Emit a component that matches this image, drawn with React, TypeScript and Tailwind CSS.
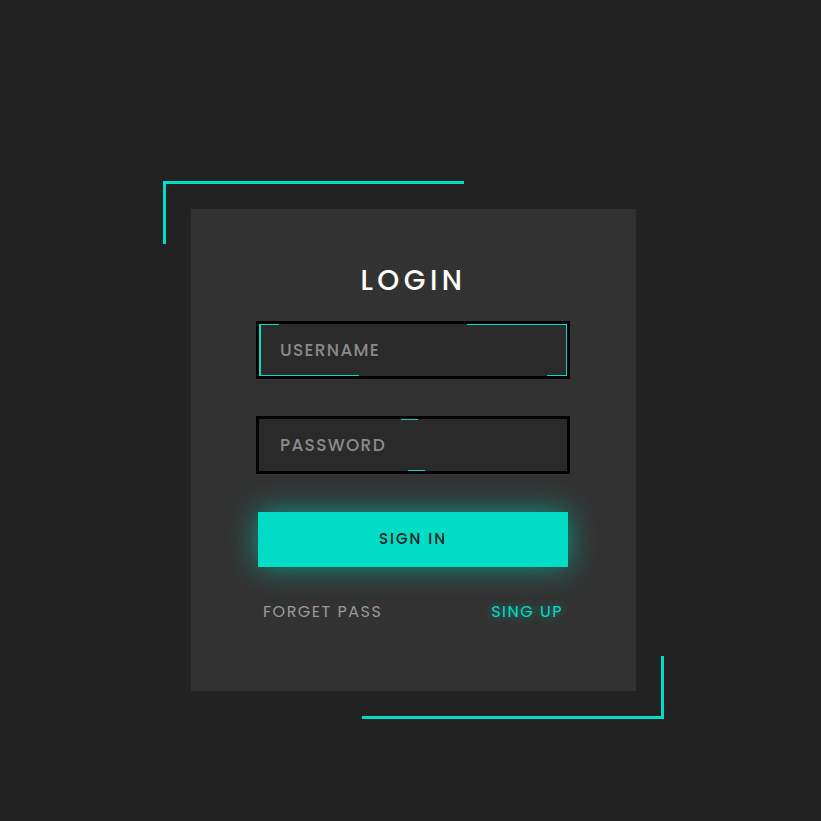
import React from 'react';

const App: React.FC = () => {
  return (
    <div className="min-h-screen w-full bg-[#222222] pt-[209px] pl-[191px] font-['Poppins','Open_Sans',sans-serif]">
      <div className="relative w-[445px] h-[482px] bg-[#323232] flex flex-col items-start">
        {/* corner brackets */}
        <span className="absolute -top-[28px] -left-[28px] w-[301px] h-[63px] border-t-[3px] border-l-[3px] border-[#00dcc5]" />
        <span className="absolute -bottom-[28px] -right-[28px] w-[302px] h-[63px] border-b-[3px] border-r-[3px] border-[#00dcc5]" />

        <h1 className="self-center mt-[56px] text-[28px] leading-[32px] font-medium tracking-[4.5px] text-white">LOGIN</h1>

        <div className="relative ml-[65px] mt-[24px] w-[314px] h-[58px] border-[3px] border-black bg-[#2a2a2a]">
          <span className="absolute top-0 left-0 w-[20px] h-px bg-[#00dcc5]" />
          <span className="absolute top-0 right-0 w-[100px] h-px bg-[#00dcc5]" />
          <span className="absolute top-0 left-0 w-[2px] h-full bg-[#00dcc5]" />
          <span className="absolute top-0 right-0 w-px h-full bg-[#00dcc5]" />
          <span className="absolute bottom-0 left-0 w-[100px] h-px bg-[#00dcc5]" />
          <span className="absolute bottom-0 right-0 w-[20px] h-px bg-[#00dcc5]" />
          <input
            type="text"
            placeholder="USERNAME"
            className="relative w-full h-full bg-transparent pl-[21px] text-[17px] font-medium tracking-[1.3px] text-[#cccccc] placeholder:text-[#8a8a8a] outline-none"
          />
        </div>

        <div className="relative ml-[65px] mt-[37px] w-[314px] h-[58px] border-[3px] border-black bg-[#2a2a2a]">
          <span className="absolute top-0 left-[142px] w-[17px] h-px bg-[#00dcc5]" />
          <span className="absolute bottom-0 left-[149px] w-[17px] h-px bg-[#00dcc5]" />
          <input
            type="password"
            placeholder="PASSWORD"
            className="relative w-full h-full bg-transparent pl-[21px] text-[17px] font-medium tracking-[1.3px] text-[#cccccc] placeholder:text-[#8a8a8a] outline-none"
          />
        </div>

        <button
          type="button"
          className="ml-[67px] mt-[38px] w-[310px] h-[55px] bg-[#00dcc5] text-[15px] font-medium tracking-[2px] text-[#222222] shadow-[0_0_30px_rgba(0,220,197,0.6)]"
        >
          SIGN IN
        </button>

        <div className="ml-[67px] mt-[33px] w-[310px] px-[5px] flex items-center justify-between text-[16px] leading-[24px] font-normal tracking-[1.5px]">
          <a href="#" className="text-[#9a9a9a]">FORGET PASS</a>
          <a href="#" className="text-[#00dcc5] [text-shadow:0_0_8px_rgba(0,220,197,0.6)]">SING UP</a>
        </div>
      </div>
    </div>
  );
};

export default App;
